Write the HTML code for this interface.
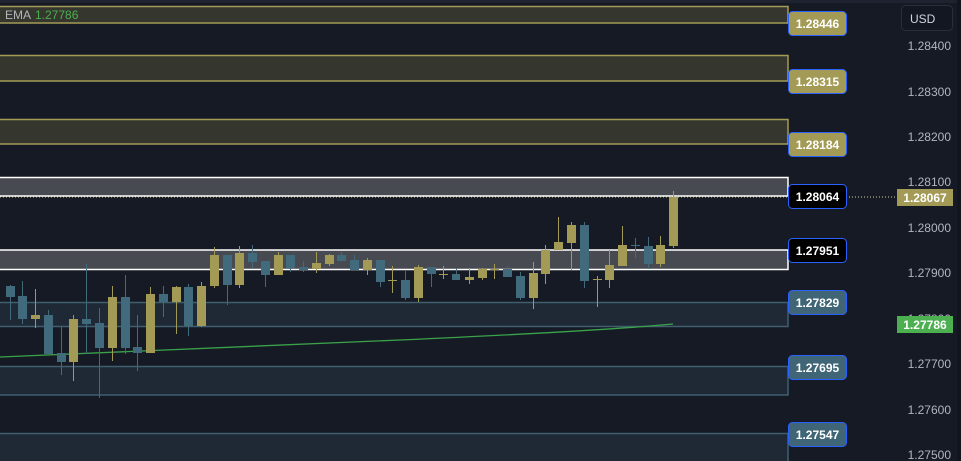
<!DOCTYPE html>
<html><head><meta charset="utf-8"><style>
html,body{margin:0;padding:0;background:#161a25;overflow:hidden}
svg{display:block}
text{font-family:"Liberation Sans",sans-serif}
g rect.b{stroke:none}
</style></head><body>
<svg width="961" height="461" xmlns="http://www.w3.org/2000/svg">
<rect width="961" height="461" fill="#161a25"/>
<rect width="961" height="3" fill="#1f2330"/>
<rect x="957" y="0" width="4" height="461" fill="#12151e"/>
<g stroke-width="1.5">
<rect x="-2" y="6.5" width="790" height="16.5" fill="#35362e" stroke="#a39b55"/>
<rect x="-2" y="55.5" width="790" height="25.5" fill="#35362e" stroke="#a39b55"/>
<rect x="-2" y="119.5" width="790" height="24.5" fill="#35362e" stroke="#a39b55"/>
<rect x="-2" y="177.5" width="790" height="18.5" fill="#484a52" stroke="#ffffff"/>
<rect x="-2" y="250" width="790" height="19.5" fill="#484a52" stroke="#ffffff"/>
<rect x="-2" y="302.5" width="790" height="24" fill="#1e2935" stroke="#3f5f6e"/>
<rect x="-2" y="366.5" width="790" height="28.5" fill="#1e2935" stroke="#3f5f6e"/>
<rect x="-2" y="433.5" width="790" height="30" fill="#1e2935" stroke="#3f5f6e"/>
</g>
<line x1="0" y1="197" x2="897" y2="197" stroke="#d8d2a0" stroke-width="1" stroke-dasharray="1,2"/>
<text x="5" y="19" font-size="12" fill="#b2b5be">EMA</text>
<text x="35" y="19" font-size="12" fill="#4caf50">1.27786</text>
<path d="M0 357 Q200 349 400 340 T673 324" fill="none" stroke="#3aa34a" stroke-width="1.3"/>
<g stroke-width="1" shape-rendering="crispEdges">
<g fill="#426a7d" stroke="#426a7d">
<line x1="10.5" y1="285" x2="10.5" y2="320"/><rect class="b" x="6" y="286" width="9" height="11"/>
<line x1="22.5" y1="281" x2="22.5" y2="324"/><rect class="b" x="18" y="296" width="9" height="23"/>
<line x1="48.5" y1="310" x2="48.5" y2="354"/><rect class="b" x="44" y="315" width="9" height="39"/>
<line x1="61.5" y1="327" x2="61.5" y2="375"/><rect class="b" x="57" y="353" width="9" height="9"/>
<line x1="86.5" y1="264" x2="86.5" y2="354"/><rect class="b" x="82" y="319" width="9" height="5"/>
<line x1="99.5" y1="308" x2="99.5" y2="398"/><rect class="b" x="95" y="323" width="9" height="25"/>
<line x1="125.5" y1="275" x2="125.5" y2="354"/><rect class="b" x="121" y="297" width="9" height="51"/>
<line x1="137.5" y1="315" x2="137.5" y2="371"/><rect class="b" x="133" y="347" width="9" height="6"/>
<line x1="163.5" y1="286" x2="163.5" y2="317"/><rect class="b" x="159" y="294" width="9" height="8"/>
<line x1="188.5" y1="284" x2="188.5" y2="336"/><rect class="b" x="184" y="287" width="9" height="39"/>
<line x1="227.5" y1="255" x2="227.5" y2="305"/><rect class="b" x="223" y="255" width="9" height="30"/>
<line x1="252.5" y1="245" x2="252.5" y2="268"/><rect class="b" x="248" y="253" width="9" height="9"/>
<line x1="265.5" y1="261" x2="265.5" y2="287"/><rect class="b" x="261" y="261" width="9" height="14"/>
<line x1="290.5" y1="255" x2="290.5" y2="272"/><rect class="b" x="286" y="255" width="9" height="13"/>
<line x1="303.5" y1="261" x2="303.5" y2="272"/><rect class="b" x="299" y="267" width="9" height="3"/>
<line x1="341.5" y1="252" x2="341.5" y2="261"/><rect class="b" x="337" y="255" width="9" height="6"/>
<line x1="354.5" y1="255" x2="354.5" y2="270"/><rect class="b" x="350" y="260" width="9" height="10"/>
<line x1="380.5" y1="260" x2="380.5" y2="287"/><rect class="b" x="376" y="260" width="9" height="22"/>
<line x1="405.5" y1="271" x2="405.5" y2="300"/><rect class="b" x="401" y="280" width="9" height="18"/>
<line x1="431.5" y1="267" x2="431.5" y2="287"/><rect class="b" x="427" y="267" width="9" height="7"/>
<line x1="456.5" y1="268" x2="456.5" y2="280"/><rect class="b" x="452" y="274" width="8" height="6"/>
<line x1="507.5" y1="266" x2="507.5" y2="277"/><rect class="b" x="503" y="269" width="9" height="8"/>
<line x1="520.5" y1="272" x2="520.5" y2="300"/><rect class="b" x="516" y="276" width="9" height="22"/>
<line x1="584.5" y1="222" x2="584.5" y2="288"/><rect class="b" x="580" y="225" width="9" height="56"/>
<line x1="635.5" y1="238" x2="635.5" y2="258"/><line x1="631" y1="245.5" x2="640" y2="245.5"/>
<line x1="648.5" y1="237" x2="648.5" y2="269"/><rect class="b" x="644" y="246" width="9" height="18"/>
</g>
<g fill="#a39b55" stroke="#a39b55">
<line x1="35.5" y1="289" x2="35.5" y2="328"/><rect class="b" x="31" y="315" width="9" height="4"/>
<line x1="73.5" y1="315" x2="73.5" y2="381"/><rect class="b" x="69" y="319" width="9" height="43"/>
<line x1="112.5" y1="286" x2="112.5" y2="361"/><rect class="b" x="108" y="297" width="9" height="51"/>
<line x1="150.5" y1="287" x2="150.5" y2="353"/><rect class="b" x="146" y="294" width="9" height="59"/>
<line x1="176.5" y1="286" x2="176.5" y2="334"/><rect class="b" x="172" y="287" width="9" height="15"/>
<line x1="201.5" y1="282" x2="201.5" y2="327"/><rect class="b" x="197" y="286" width="9" height="40"/>
<line x1="214.5" y1="247" x2="214.5" y2="288"/><rect class="b" x="210" y="255" width="9" height="31"/>
<line x1="239.5" y1="246" x2="239.5" y2="288"/><rect class="b" x="235" y="253" width="9" height="32"/>
<line x1="278.5" y1="252" x2="278.5" y2="275"/><rect class="b" x="274" y="255" width="9" height="20"/>
<line x1="316.5" y1="252" x2="316.5" y2="273"/><rect class="b" x="312" y="263" width="9" height="6"/>
<line x1="329.5" y1="254" x2="329.5" y2="266"/><rect class="b" x="325" y="255" width="9" height="9"/>
<line x1="367.5" y1="258" x2="367.5" y2="275"/><rect class="b" x="363" y="260" width="9" height="10"/>
<line x1="392.5" y1="266" x2="392.5" y2="293"/><line x1="388" y1="280.5" x2="397" y2="280.5"/>
<line x1="418.5" y1="265" x2="418.5" y2="302"/><rect class="b" x="414" y="267" width="9" height="31"/>
<line x1="443.5" y1="266" x2="443.5" y2="279"/><line x1="439" y1="274.5" x2="448" y2="274.5"/>
<line x1="469.5" y1="268" x2="469.5" y2="284"/><rect class="b" x="465" y="277" width="9" height="3"/>
<line x1="482.5" y1="268" x2="482.5" y2="280"/><rect class="b" x="478" y="269" width="9" height="9"/>
<line x1="494.5" y1="264" x2="494.5" y2="279"/><line x1="490" y1="269.5" x2="499" y2="269.5"/>
<line x1="533.5" y1="262" x2="533.5" y2="309"/><rect class="b" x="529" y="273" width="9" height="25"/>
<line x1="545.5" y1="245" x2="545.5" y2="284"/><rect class="b" x="541" y="250" width="9" height="24"/>
<line x1="558.5" y1="217" x2="558.5" y2="250"/><rect class="b" x="554" y="242" width="9" height="8"/>
<line x1="571.5" y1="222" x2="571.5" y2="270"/><rect class="b" x="567" y="225" width="9" height="18"/>
<line x1="597.5" y1="276" x2="597.5" y2="307"/><line x1="593" y1="279.5" x2="602" y2="279.5"/>
<line x1="609.5" y1="250" x2="609.5" y2="288"/><rect class="b" x="605" y="265" width="9" height="15"/>
<line x1="622.5" y1="226" x2="622.5" y2="266"/><rect class="b" x="618" y="245" width="9" height="21"/>
<line x1="660.5" y1="236" x2="660.5" y2="267"/><rect class="b" x="656" y="245" width="9" height="19"/>
<line x1="673.5" y1="191" x2="673.5" y2="248"/><rect class="b" x="669" y="197" width="9" height="49"/>
</g>
</g>
<g font-size="12" font-weight="bold" text-anchor="middle">
<rect x="788.5" y="11.5" width="58" height="24" rx="4" fill="#a39b55" stroke="#2962ff"/><text x="817.5" y="28" fill="#fff">1.28446</text>
<rect x="788.5" y="69.5" width="58" height="24" rx="4" fill="#a39b55" stroke="#2962ff"/><text x="817.5" y="86" fill="#fff">1.28315</text>
<rect x="788.5" y="132.5" width="58" height="24" rx="4" fill="#a39b55" stroke="#2962ff"/><text x="817.5" y="149" fill="#fff">1.28184</text>
<rect x="788.5" y="184.5" width="58" height="24" rx="4" fill="#000" stroke="#2962ff"/><text x="817.5" y="201" fill="#fff">1.28064</text>
<rect x="788.5" y="238.5" width="58" height="24" rx="4" fill="#000" stroke="#2962ff"/><text x="817.5" y="255" fill="#fff">1.27951</text>
<rect x="788.5" y="290.5" width="58" height="24" rx="4" fill="#3f6576" stroke="#2962ff"/><text x="817.5" y="307" fill="#fff">1.27829</text>
<rect x="788.5" y="355.5" width="58" height="24" rx="4" fill="#3f6576" stroke="#2962ff"/><text x="817.5" y="372" fill="#fff">1.27695</text>
<rect x="788.5" y="422.5" width="58" height="24" rx="4" fill="#3f6576" stroke="#2962ff"/><text x="817.5" y="439" fill="#fff">1.27547</text>
</g>
<rect x="901.5" y="5.5" width="51" height="25" rx="4" fill="#131722" stroke="#2a2e39"/>
<text x="910" y="23" font-size="12" fill="#d1d4dc">USD</text>
<g font-size="12" fill="#b2b5be" text-anchor="end">
<text x="951" y="50">1.28400</text>
<text x="951" y="96">1.28300</text>
<text x="951" y="141">1.28200</text>
<text x="951" y="186">1.28100</text>
<text x="951" y="232">1.28000</text>
<text x="951" y="277">1.27900</text>
<text x="951" y="323">1.27800</text>
<text x="951" y="368">1.27700</text>
<text x="951" y="414">1.27600</text>
<text x="951" y="459">1.27500</text>
</g>
<rect x="897" y="189" width="56" height="17" fill="#a39b55"/>
<text x="925" y="202" font-size="12" font-weight="bold" fill="#fff" text-anchor="middle">1.28067</text>
<rect x="897" y="316" width="56" height="17" fill="#4caf50"/>
<text x="925" y="329" font-size="12" font-weight="bold" fill="#fff" text-anchor="middle">1.27786</text>
</svg>
</body></html>
